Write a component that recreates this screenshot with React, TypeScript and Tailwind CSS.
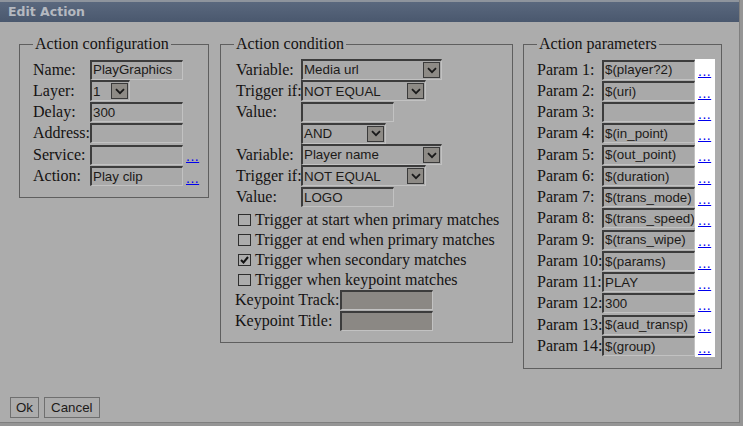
import React from "react";

const serif = "font-['Liberation_Serif',serif] text-[16px] leading-[18px] text-[#141212]";
const sans = "font-['Liberation_Sans',Arial,sans-serif] text-[13.33px] text-[#1c1a18]";
const inset =
  "border-t-2 border-l-2 border-b border-r border-t-[#3c3c3c] border-l-[#3c3c3c] border-b-[#c2c2c2] border-r-[#c2c2c2]";

function TextBox({ value = "", width = "w-[93px]", disabled = false }) {
  return (
    <div
      className={
        "h-[20px] flex items-center pl-[1px] leading-none whitespace-nowrap overflow-hidden " +
        inset +
        " " +
        width +
        " " +
        sans +
        (disabled ? " bg-[#8b8884]" : " bg-[#a9a9a9]")
      }
    >
      {value}
    </div>
  );
}

function Chevron() {
  return (
    <svg width="10" height="7" viewBox="0 0 10 7">
      <path d="M1 1.2 L5 5.2 L9 1.2" fill="none" stroke="#1a1a1a" strokeWidth="1.8" />
    </svg>
  );
}

function Select({ value, width }: { value: string; width: string }) {
  return (
    <div
      className={
        "h-[21px] flex items-center bg-[#a9a9a9] " + inset + " " + width + " " + sans
      }
    >
      <span className="flex-1 pl-[1px] leading-none whitespace-nowrap">{value}</span>
      <div className="w-[17px] h-[16px] mr-[1px] flex items-center justify-center bg-[#8e8b86] border border-[#3a3a3a]">
        <Chevron />
      </div>
    </div>
  );
}

function Dots({ white = false }) {
  return (
    <div className={"self-stretch flex items-end w-[20px] " + (white ? "bg-white" : "")}>
      <a className="ml-[3px] mb-[2px] font-['Liberation_Sans',Arial,sans-serif] text-[14px] leading-[13px] tracking-[0.5px] text-[#0000ee] underline">
        ...
      </a>
    </div>
  );
}

function Row({ label, labelW, children }: { label: string; labelW: string; children: React.ReactNode }) {
  return (
    <div className="h-[21.25px] flex items-center">
      <span className={serif + " whitespace-nowrap " + labelW}>{label}</span>
      {children}
    </div>
  );
}

function Check({ label, checked = false }: { label: string; checked?: boolean }) {
  return (
    <div className="h-[20px] flex items-center pl-[2px]">
      <div className="w-[13px] h-[12px] border border-[#2e2e2e] flex items-center justify-center mr-[4px]">
        {checked && (
          <svg width="9" height="8" viewBox="0 0 9 8">
            <path d="M1 4 L3.5 6.5 L8 1" fill="none" stroke="#111" strokeWidth="2" />
          </svg>
        )}
      </div>
      <span className={serif + " whitespace-nowrap"}>{label}</span>
    </div>
  );
}

function Group({
  title,
  className,
  legend = "",
  children,
}: {
  title: string;
  className: string;
  legend?: string;
  children: React.ReactNode;
}) {
  return (
    <fieldset className={"border border-[#5f5f5f] " + className}>
      <legend className={"px-[2px] " + legend + " " + serif}>{title}</legend>
      {children}
    </fieldset>
  );
}

export default function App() {
  const params = [
    "$(player?2)",
    "$(uri)",
    "",
    "$(in_point)",
    "$(out_point)",
    "$(duration)",
    "$(trans_mode)",
    "$(trans_speed)",
    "$(trans_wipe)",
    "$(params)",
    "PLAY",
    "300",
    "$(aud_transp)",
    "$(group)",
  ];

  return (
    <div className="w-[743px] h-[426px] bg-[#959595] overflow-hidden">
      <div className="w-[740px] h-[423px] bg-[#acacac] flex flex-col border-r border-b border-[#7f7f7f]">
        <div className="h-[22px] shrink-0 flex items-center pl-[8px] border-t-2 border-[#8e949d] bg-gradient-to-b from-[#5a687e] to-[#4a586e]">
          <span className="font-['DejaVu_Sans',Verdana,sans-serif] font-bold text-[12.5px] text-[#b5b9c0]">
            Edit Action
          </span>
        </div>

        <div className="flex items-start mt-[13px] pl-[19px]">
          <Group title="Action configuration" className="w-[190px] pl-[13px] pt-[6px] pb-[10px]">
            <Row label="Name:" labelW="w-[57px]">
              <TextBox value="PlayGraphics" />
            </Row>
            <Row label="Layer:" labelW="w-[57px]">
              <Select value="1" width="w-[40px]" />
            </Row>
            <Row label="Delay:" labelW="w-[57px]">
              <TextBox value="300" />
            </Row>
            <Row label="Address:" labelW="w-[57px]">
              <TextBox />
            </Row>
            <Row label="Service:" labelW="w-[57px]">
              <TextBox />
              <Dots />
            </Row>
            <Row label="Action:" labelW="w-[57px]">
              <TextBox value="Play clip" />
              <Dots />
            </Row>
          </Group>

          <Group
            title="Action condition"
            legend="-ml-[2px]"
            className="ml-[11px] w-[293px] pl-[15px] pt-[6px] pb-[10px]"
          >
            <Row label="Variable:" labelW="w-[65px]">
              <Select value="Media url" width="w-[141px]" />
            </Row>
            <Row label="Trigger if:" labelW="w-[65px]">
              <Select value="NOT EQUAL" width="w-[125px]" />
            </Row>
            <Row label="Value:" labelW="w-[65px]">
              <TextBox />
            </Row>
            <Row label="" labelW="w-[65px]">
              <Select value="AND" width="w-[85px]" />
            </Row>
            <Row label="Variable:" labelW="w-[65px]">
              <Select value="Player name" width="w-[141px]" />
            </Row>
            <Row label="Trigger if:" labelW="w-[65px]">
              <Select value="NOT EQUAL" width="w-[125px]" />
            </Row>
            <Row label="Value:" labelW="w-[65px]">
              <TextBox value="LOGO" />
            </Row>
            <div className="mt-[2px]">
              <Check label="Trigger at start when primary matches" />
              <Check label="Trigger at end when primary matches" />
              <Check label="Trigger when secondary matches" checked />
              <Check label="Trigger when keypoint matches" />
            </div>
            <div className="h-[21px] flex items-center -ml-[1px]">
              <span className={serif + " w-[105px] whitespace-nowrap"}>Keypoint Track:</span>
              <TextBox disabled />
            </div>
            <div className="h-[21px] flex items-center -ml-[1px]">
              <span className={serif + " w-[105px] whitespace-nowrap"}>Keypoint Title:</span>
              <TextBox disabled />
            </div>
          </Group>

          <Group title="Action parameters" className="ml-[10px] w-[199px] pl-[13px] pt-[6px] pb-[11px]">
            {params.map((p, i) => (
              <Row key={i} label={"Param " + (i + 1) + ":"} labelW="w-[65px]">
                <TextBox value={p} width="w-[93px]" />
                <Dots white />
              </Row>
            ))}
          </Group>
        </div>

        <div className="flex-1" />
        <div className="flex gap-[5px] pl-[10px] pb-[4px]">
          <button className={"h-[21px] px-[5px] bg-[#acacac] border border-[#6f6f6f] leading-none " + sans}>
            Ok
          </button>
          <button className={"h-[21px] px-[6px] bg-[#acacac] border border-[#6f6f6f] leading-none " + sans}>
            Cancel
          </button>
        </div>
      </div>
    </div>
  );
}
